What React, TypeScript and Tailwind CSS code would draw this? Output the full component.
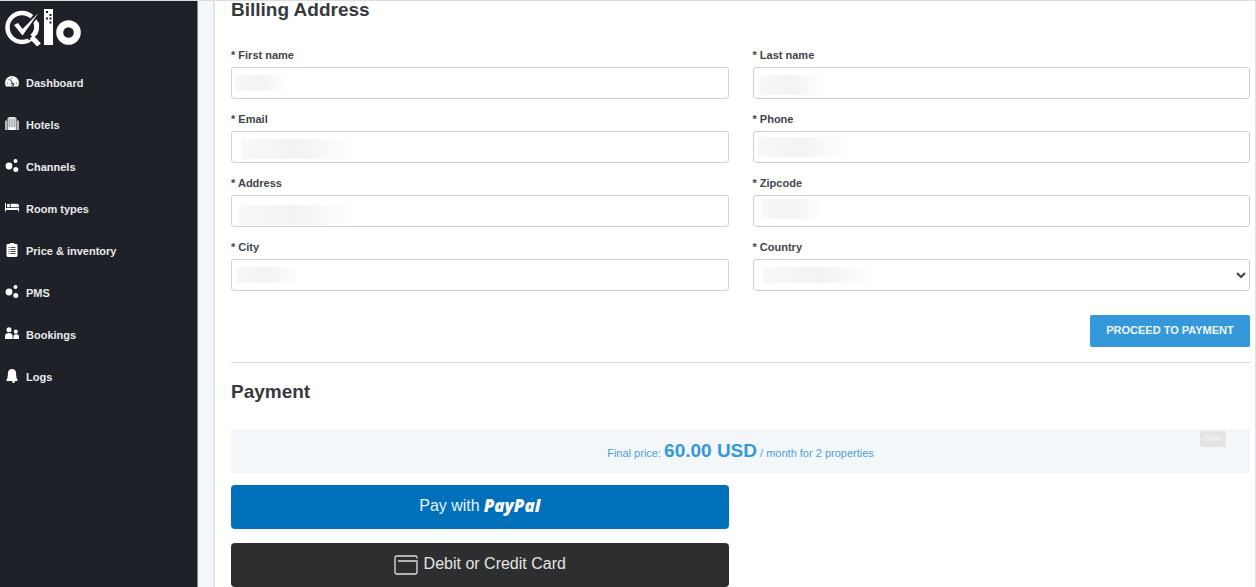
import type { ReactNode } from "react";

type NavItem = {
  label: string;
  icon: ReactNode;
};

type Field = {
  id: string;
  label: string;
  mask: string;
  select?: boolean;
};

function Icon({ children }: { children: ReactNode }) {
  return (
    <svg viewBox="0 0 14 14" className="mb-0.5 size-3.5 shrink-0" fill="#fff" aria-hidden="true">
      {children}
    </svg>
  );
}

const gaugeIcon = (
  <Icon>
    <path d="M7 1a7 7 0 0 0-7 7c0 1.300.4 2.500 1 3.500h12c.6-1 1-2.200 1-3.500a7 7 0 0 0-7-7z" />
    <g fill="#6b6e76">
      <circle cx="2.500" cy="8" r=".7" />
      <circle cx="3.900" cy="4.800" r=".7" />
      <circle cx="7" cy="3.300" r=".7" />
      <circle cx="11.500" cy="8" r=".7" />
    </g>
    <path fill="#3b3e47" d="M5 4.300l.8-.4 1.700 3.800a1.700 1.700 0 1 1-1 .4z" />
    <circle cx="7" cy="9.700" r=".8" />
  </Icon>
);

const hotelIcon = (
  <Icon>
    <path fill="#b9bbc0" d="M0 3.500h2V13H0zM12 3.500h2V13h-2z" />
    <path fill="#e4e5e7" d="M2.500 1h1V0h7v1h1v12h-9z" />
    <path
      stroke="#9b9ea5"
      strokeWidth=".6"
      fill="none"
      d="M4.500 1.500v9M7 1.500v9M9.500 1.500v9M3 3h8M3 5h8M3 7h8M3 9h8"
    />
    <path d="M4.500 10.500h5V13h-5z" />
  </Icon>
);

const bubblesIcon = (
  <Icon>
    <circle cx="4" cy="7" r="3.400" />
    <circle cx="10.500" cy="2" r="2" />
    <circle cx="10.800" cy="10.500" r="2.500" />
  </Icon>
);

const bedIcon = (
  <Icon>
    <path d="M0 2h1v5h13v3.500h-1V9H1v1.500H0z" />
    <path d="M2 3h2.800v3.200H2zM5.600 2.800H12a2 2 0 0 1 2 2v1.400H5.600z" />
  </Icon>
);

const clipboardIcon = (
  <Icon>
    <path d="M4.500 1a2.600 2.600 0 0 1 5 0h1.600c.8 0 1.400.6 1.400 1.400v10.200c0 .8-.6 1.400-1.400 1.400H2.900c-.8 0-1.400-.6-1.400-1.400V2.400C1.500 1.600 2.100 1 2.900 1z" />
    <path
      stroke="#4b4e57"
      strokeWidth="1"
      fill="none"
      d="M3.500 4.500h1M5.500 4.500h5M3.500 6.500h1M5.500 6.500h5M3.500 8.500h1M5.500 8.500h5M3.500 10.500h1M5.500 10.500h5"
    />
  </Icon>
);

const peopleIcon = (
  <Icon>
    <circle cx="4" cy="2.800" r="2.500" />
    <path d="M0 12V9.100c0-2 1.500-3.200 4-3.200 2.300 0 3.600 1.200 3.600 3.200V12z" />
    <circle cx="10.800" cy="4.700" r="2.100" />
    <path d="M8.400 12V9.500c0-1.500 1-2.200 2.700-2.200 1.900 0 2.900.8 2.900 2.500V12z" />
  </Icon>
);

const bellIcon = (
  <Icon>
    <path d="M7 0C4.300 0 2.900 2 2.900 4.600c0 3.400-.6 5.200-1.500 6.300v1h11.200v-1c-.9-1.100-1.500-2.900-1.500-6.300C11.100 2 9.700 0 7 0z" />
    <path d="M6.800 12.200h3.400a1.700 1.700 0 0 1-3.400 0z" />
  </Icon>
);

const navItems: NavItem[] = [
  { label: "Dashboard", icon: gaugeIcon },
  { label: "Hotels", icon: hotelIcon },
  { label: "Channels", icon: bubblesIcon },
  { label: "Room types", icon: bedIcon },
  { label: "Price & inventory", icon: clipboardIcon },
  { label: "PMS", icon: bubblesIcon },
  { label: "Bookings", icon: peopleIcon },
  { label: "Logs", icon: bellIcon },
];

const fields: Field[] = [
  { id: "firstName", label: "First name", mask: "left-1 top-2 h-4 w-13" },
  { id: "lastName", label: "Last name", mask: "left-1.5 top-2 h-5 w-16" },
  { id: "email", label: "Email", mask: "left-2.5 top-2 h-5 w-28" },
  { id: "phone", label: "Phone", mask: "left-1 top-1.5 h-5 w-22" },
  { id: "address", label: "Address", mask: "left-2 top-2.5 h-5 w-28" },
  { id: "zipcode", label: "Zipcode", mask: "left-2 top-1 h-5 w-15" },
  { id: "city", label: "City", mask: "left-1.5 top-2 h-4 w-15" },
  { id: "country", label: "Country", mask: "left-2.5 top-2 h-4 w-28", select: true },
];

function Logo() {
  return (
    <svg viewBox="0 0 77 38" className="h-[38px] w-[77px]" role="img" aria-label="Qlo">
      <circle cx="17" cy="19.500" r="14.500" fill="none" stroke="#fff" strokeWidth="4.500" />
      <path d="M18 23L36 2" stroke="#1f2129" strokeWidth="5" />
      <path d="M22.500 30.500l4-4 9 9" stroke="#1f2129" strokeWidth="6" fill="none" />
      <path d="M9 17l4-2 4.500 6L33.500 5 17.500 27.500z" fill="#fff" />
      <path d="M26.500 29l7.500 8" stroke="#fff" strokeWidth="5" />
      <path d="M31.500 14.500a15 15 0 0 1-4.500 14" stroke="#fff" strokeWidth="4.500" fill="none" />
      <path d="M39 1h9v36h-9z" fill="#fff" />
      <path
        d="M41 3h2v2h-2zM44.500 6h2v2h-2zM41 9.500h2v2h-2zM44.500 9.500h2v2h-2zM44.500 13.500h2v2h-2z"
        fill="#1f2129"
      />
      <circle cx="63.500" cy="24.500" r="8.800" fill="none" stroke="#fff" strokeWidth="7" />
    </svg>
  );
}

function Sidebar() {
  return (
    <aside className="w-[198px] shrink-0 border-r border-[#85888e] bg-[#1f2129] pt-[7px] pl-[5px]">
      <a href="#home" className="block">
        <Logo />
      </a>
      <nav className="mt-4">
        <ul>
          {navItems.map((item) => (
            <li key={item.label}>
              <a
                href="#"
                className="flex h-[42px] items-center gap-[7px] text-[11px] font-bold text-[#e9eaec]"
              >
                {item.icon}
                {item.label}
              </a>
            </li>
          ))}
        </ul>
      </nav>
    </aside>
  );
}

function AddressField({ field }: { field: Field }) {
  const control =
    "block h-8 w-full rounded-[3px] border border-[#d0d0d0] bg-white px-2 text-xs text-[#444]";

  return (
    <div>
      <label htmlFor={field.id} className="mb-1 block text-[11px] leading-4 font-bold text-[#41464b]">
        * {field.label}
      </label>
      <div className="relative">
        {field.select ? (
          <>
            <select id={field.id} className={control + " appearance-none"} />
            <svg
              viewBox="0 0 10 7"
              className="pointer-events-none absolute top-[13px] right-1 h-[7px] w-2.5"
              fill="none"
              stroke="#444"
              strokeWidth="2"
            >
              <path d="M1 1l4 4 4-4" />
            </svg>
          </>
        ) : (
          <input id={field.id} type="text" className={control} />
        )}
        <span
          className={
            "pointer-events-none absolute bg-linear-to-r from-[#f8f8f8] via-[#f3f3f3] to-[#fefefe] " +
            field.mask
          }
        />
      </div>
    </div>
  );
}

export default function App() {
  return (
    <div className="flex h-screen min-h-full overflow-hidden border-t border-[#dcdee0] bg-[#f3f7fb] font-['Liberation_Sans',Arial,sans-serif]">
      <Sidebar />

      <main className="ml-[15px] flex-1 border-x-2 border-r border-[#dfe3e7] bg-white pr-[5px] pl-4">
        <h2 className="text-[19px] leading-[18px] font-bold text-[#363a3e]">Billing Address</h2>

        <form onSubmit={(e) => e.preventDefault()}>
          <div className="mt-7 grid grid-cols-2 gap-x-6 gap-y-3">
            {fields.map((field) => (
              <AddressField key={field.id} field={field} />
            ))}
          </div>
          <div className="mt-6 flex justify-end">
            <button
              type="submit"
              className="h-8 w-40 rounded-[2px] bg-[#3498db] pb-0.5 text-[11px] font-bold text-[#eef7fd]"
            >
              PROCEED TO PAYMENT
            </button>
          </div>
        </form>

        <hr className="mt-[15px] border-[#d6d6d6]" />

        <h2 className="mt-[17px] text-[19px] leading-6 font-bold text-[#363a3e]">Payment</h2>

        <div className="relative mt-[25px] flex h-11 items-center justify-center bg-[#f3f7fa] text-[#4a9fdc]">
          <p className="text-[11px]">
            Final price: <strong className="text-[19px] text-[#3498db]">60.00 USD</strong> / month for 2
            properties
          </p>
          <span className="absolute top-0.5 right-6 flex h-4 w-[26px] items-center justify-center rounded-[1px] bg-[#e2e4e5] text-[9px] font-bold text-[#f1f2f3]">
            Blur
          </span>
        </div>

        <div className="mt-3 grid grid-cols-2 gap-x-6">
          <div className="flex flex-col gap-3.5">
            <button
              type="button"
              className="flex h-11 items-center justify-center gap-1 rounded bg-[#0070ba] pb-0.5 text-base text-[#e8f3fa]"
            >
              <span>Pay with</span>
              <span className="font-['Open_Sans',sans-serif] text-[17px] font-extrabold text-white italic">
                PayPal
              </span>
            </button>
            <button
              type="button"
              className="flex h-11 items-center justify-center gap-1.5 rounded bg-[#2c2e2f] pb-0.5 text-base text-[#e4e4e4]"
            >
              <svg
                viewBox="0 0 24 20"
                className="mt-0.5 h-5 w-6"
                fill="none"
                stroke="#e0e0e0"
                strokeWidth="1.300"
                strokeLinecap="round"
              >
                <path d="M23 3V2.500A1.500 1.500 0 0 0 21.500 1h-19A1.500 1.500 0 0 0 1 2.500v15A1.500 1.500 0 0 0 2.500 19h19a1.500 1.500 0 0 0 1.500-1.500V6H4.500" />
              </svg>
              <span>Debit or Credit Card</span>
            </button>
          </div>
        </div>
      </main>
    </div>
  );
}
